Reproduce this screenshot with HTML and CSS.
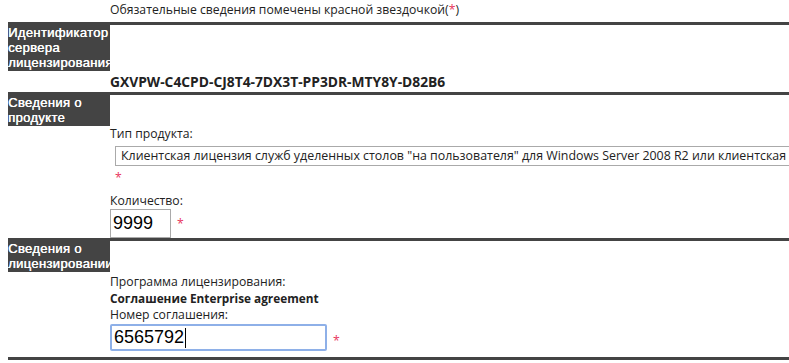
FILE: index.html
```html
<!doctype html>
<html lang="ru">
<head>
  <meta charset="utf-8">
  <title>Сведения о лицензировании</title>
  <link rel="stylesheet" href="styles.css">
</head>
<body>
  <div class="form">
    <p class="note">Обязательные сведения помечены красной звездочкой(<span class="req">*</span>)</p>

    <section class="group">
      <h2 class="group-title">Идентификатор сервера лицензирования</h2>
      <div class="group-body">
        <div class="server-id">GXVPW-C4CPD-CJ8T4-7DX3T-PP3DR-MTY8Y-D82B6</div>
      </div>
    </section>

    <section class="group">
      <h2 class="group-title">Сведения о продукте</h2>
      <div class="group-body">
        <label class="field-label">Тип продукта:</label>
        <div class="select">Клиентская лицензия служб уделенных столов "на пользователя" для Windows Server 2008 R2 или клиентская</div>
        <div class="req req-line">*</div>
        <label class="field-label">Количество:</label>
        <div class="field-row">
          <input class="input input-qty" type="text" value="9999">
          <span class="req">*</span>
        </div>
      </div>
    </section>

    <section class="group">
      <h2 class="group-title">Сведения о лицензировании</h2>
      <div class="group-body group-body-lic">
        <div class="field-label">Программа лицензирования:</div>
        <div class="field-value">Соглашение Enterprise agreement</div>
        <label class="field-label">Номер соглашения:</label>
        <div class="field-row">
          <div class="input input-agreement">6565792<span class="caret"></span></div>
          <span class="req">*</span>
        </div>
      </div>
    </section>

    <div class="group group-end"></div>
  </div>
</body>
</html>
```

FILE: styles.css
```css
body {
  margin: 0;
  padding: 0 0 0 8px;
  background: #fff;
  overflow: hidden;
}

.form {
  font-family: "Open Sans", "Segoe UI", sans-serif;
  font-size: 12.2px;
  color: #222;
}

.note {
  margin: 0;
  padding: 2px 0 0 102px;
  height: 20px;
  line-height: 16px;
}

.req {
  color: #e8365c;
}

.group {
  border-top: 3px solid #444;
}

.group-title {
  margin: 0;
  width: 102px;
  background: #444;
  color: #fff;
  font-family: "Liberation Sans", Arial, sans-serif;
  font-size: 13px;
  font-weight: normal;
  letter-spacing: 0.35px;
  line-height: 15px;
  text-shadow: 0.4px 0 0 #fff;
  padding: 0 0 1px 0;
}

.group-body {
  padding-left: 102px;
}

.server-id {
  font-weight: bold;
  font-size: 13.8px;
  line-height: 20px;
  padding: 1px 0 0;
}

.field-label {
  display: block;
  line-height: 16px;
}

.group-body-lic {
  padding-top: 2px;
}

.select {
  margin: 4px 0 0 5px;
  height: 18px;
  line-height: 18px;
  font-size: 12.4px;
  border-top: 1px solid #aaa;
  border-bottom: 1px solid #aaa;
  border-left: 1px solid #aaa;
  padding-left: 5px;
  white-space: nowrap;
  overflow: hidden;
}

.req-line {
  margin: 3px 0 0 5px;
  height: 24px;
  line-height: 18px;
}

.field-row {
  display: flex;
  align-items: center;
  gap: 6px;
}

.input {
  box-sizing: border-box;
  margin: 0;
  font-family: "Liberation Sans", Arial, sans-serif;
  font-size: 18px;
  color: #000;
  background: #fff;
  padding: 0 2px;
  outline: none;
}

.input-qty {
  width: 61px;
  height: 29px;
  border: 1px solid #aaa;
}

.input-agreement {
  display: flex;
  align-items: center;
  width: 217px;
  height: 27px;
  border: 2px solid #8eb0e8;
  border-radius: 2px;
  margin: 1px 0 6px;
}

.caret {
  display: inline-block;
  width: 1px;
  height: 20px;
  background: #000;
  margin-left: 1px;
}

.field-value {
  font-weight: bold;
  font-size: 11.8px;
  line-height: 16px;
  padding-bottom: 1px;
}
```
